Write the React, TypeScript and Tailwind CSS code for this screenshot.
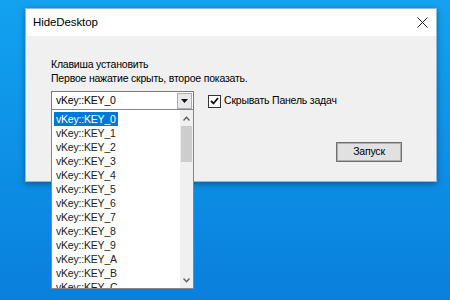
import React from 'react';

const keys = ['0', '1', '2', '3', '4', '5', '6', '7', '8', '9', 'A', 'B', 'C'];

function KeyList() {
  return (
    <div className="absolute left-[51px] top-[109px] flex h-[180px] w-[143px] overflow-hidden border border-[#828790] bg-white">
      <div className="flex-1 overflow-hidden pt-[2px] pl-[2px]">
        {keys.map((k, i) => (
          <div key={k} className="flex h-[14px] items-center">
            <span className={i === 0 ? 'bg-[#0078d7] px-[2px] leading-[14px] text-white' : 'px-[2px] leading-[14px] text-[#222]'}>
              vKey::KEY_{k}
            </span>
          </div>
        ))}
      </div>
      <div className="flex w-[13px] flex-col bg-[#f0f0f0]">
        <div className="flex h-[16px] items-center justify-center">
          <svg width="7" height="5" viewBox="0 0 7 5"><path d="M0.5 4.5 L3.5 1.2 L6.5 4.5" fill="none" stroke="#606060" strokeWidth="1.4" /></svg>
        </div>
        <div className="mx-[1px] h-[36px] bg-[#cdcdcd]"></div>
        <div className="flex-1"></div>
        <div className="flex h-[16px] items-center justify-center">
          <svg width="7" height="5" viewBox="0 0 7 5"><path d="M0.5 0.5 L3.5 3.8 L6.5 0.5" fill="none" stroke="#606060" strokeWidth="1.4" /></svg>
        </div>
      </div>
    </div>
  );
}

export default function App() {
  return (
    <div className="relative h-[300px] w-[450px] overflow-hidden bg-gradient-to-b from-[#13a2f0] to-[#0a7fdc] pt-[8px] pl-[25px] font-['Liberation_Sans',sans-serif] text-[10.5px] tracking-[-0.2px] text-black">
      <div className="flex h-[174px] w-[412px] flex-col border border-[#8fb8de] bg-[#f0f0f0] shadow-[0_2px_6px_rgba(0,0,0,0.35)]">
        <div className="flex h-[27px] items-center justify-between bg-white pl-[7px] pr-[8px]">
          <span className="text-[11.5px] tracking-[-0.1px] text-black">HideDesktop</span>
          <svg width="11" height="11" viewBox="0 0 11 11">
            <path d="M0.5 0.5 L10.5 10.5 M10.5 0.5 L0.5 10.5" stroke="#222" strokeWidth="1" />
          </svg>
        </div>
        <div className="flex flex-col pt-[21px] pl-[25px] pr-[34px]">
          <div className="leading-[14px]">Клавиша установить</div>
          <div className="leading-[14px]">Первое нажатие скрыть, второе показать.</div>
          <div className="mt-[6px] flex items-center">
            <div className="flex h-[20px] w-[143px] items-center border border-[#7a7a7a] bg-white">
              <span className="flex-1 pl-[4px]">vKey::KEY_0</span>
              <div className="mr-[1px] flex h-[16px] w-[15px] items-center justify-center border border-[#adadad] bg-[#e8e8e8]">
                <svg width="7" height="4" viewBox="0 0 7 4"><path d="M0 0 H7 L3.5 4 Z" fill="#111" /></svg>
              </div>
            </div>
            <div className="ml-[14px] flex items-center gap-[3px]">
              <div className="flex h-[13px] w-[13px] items-center justify-center border border-[#333] bg-white">
                <svg width="9" height="8" viewBox="0 0 9 8"><path d="M1 4 L3.5 6.5 L8 1" fill="none" stroke="#111" strokeWidth="1.8" /></svg>
              </div>
              <span>Скрывать Панель задач</span>
            </div>
          </div>
          <div className="mt-[31px] flex justify-end">
            <button className="h-[20px] w-[66px] border border-[#707070] bg-[#e1e1e1] text-[10.5px] shadow-[inset_0_0_0_1px_#adadad]">Запуск</button>
          </div>
        </div>
      </div>
      <KeyList />
    </div>
  );
}
